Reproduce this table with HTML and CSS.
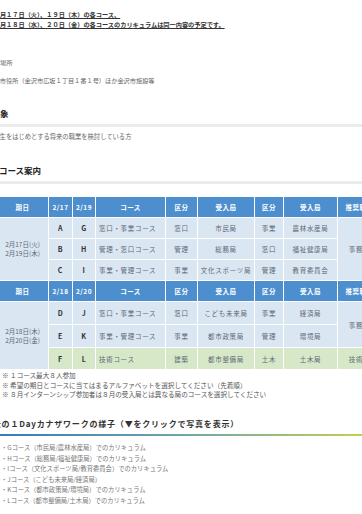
FILE: index.html
```html
<!DOCTYPE html>
<html lang="ja">
<head>
<meta charset="utf-8">
<link rel="stylesheet" href="styles.css">
</head>
<body>
<div class="page">
  <div class="notice">
    <p>２月１７日（火）、１９日（木）の各コース、</p>
    <p>２月１８日（水）、２０日（金）の各コースのカリキュラムは同一内容の予定です。</p>
  </div>

  <div class="place">
    <p class="label">開催場所</p>
    <p class="addr">金沢市役所（金沢市広坂１丁目１番１号）ほか金沢市施設等</p>
  </div>

  <h2 class="sec sec-target">対象</h2>
  <p class="target">大学生をはじめとする将来の職業を検討している方</p>

  <h2 class="sec sec-course">４．コース案内</h2>

  <table class="courses">
    <colgroup>
      <col class="c-date"><col class="c-a"><col class="c-b"><col class="c-course"><col class="c-kbn"><col class="c-dept"><col class="c-kbn2"><col class="c-dept2"><col class="c-job">
    </colgroup>
    <tr class="head">
      <th>期日</th><th>2/17</th><th>2/19</th><th>コース</th><th>区分</th><th>受入局</th><th>区分</th><th>受入局</th><th>推奨職種</th>
    </tr>
    <tr class="r1">
      <td rowspan="3" class="date">2月17日(火)<br>2月19日(木)</td>
      <td class="letter">A</td><td class="letter">G</td><td class="course">窓口・事業コース</td>
      <td>窓口</td><td>市民局</td><td>事業</td><td>農林水産局</td>
      <td rowspan="3">事務職</td>
    </tr>
    <tr class="r2">
      <td class="letter">B</td><td class="letter">H</td><td class="course">管理・窓口コース</td>
      <td>管理</td><td>総務局</td><td>窓口</td><td>福祉健康局</td>
    </tr>
    <tr class="r3">
      <td class="letter">C</td><td class="letter">I</td><td class="course">事業・管理コース</td>
      <td>事業</td><td>文化スポーツ局</td><td>管理</td><td>教育委員会</td>
    </tr>
    <tr class="head">
      <th>期日</th><th>2/18</th><th>2/20</th><th>コース</th><th>区分</th><th>受入局</th><th>区分</th><th>受入局</th><th>推奨職種</th>
    </tr>
    <tr class="r4">
      <td rowspan="3" class="date">2月18日(木)<br>2月20日(金)</td>
      <td class="letter">D</td><td class="letter">J</td><td class="course">窓口・事業コース</td>
      <td>窓口</td><td>こども未来局</td><td>事業</td><td>経済局</td>
      <td rowspan="2">事務職</td>
    </tr>
    <tr class="r5">
      <td class="letter">E</td><td class="letter">K</td><td class="course">事業・管理コース</td>
      <td>事業</td><td>都市政策局</td><td>管理</td><td>環境局</td>
    </tr>
    <tr class="r6 tech">
      <td class="letter">F</td><td class="letter">L</td><td class="course">技術コース</td>
      <td>建築</td><td>都市整備局</td><td>土木</td><td>土木局</td>
      <td>技術職</td>
    </tr>
  </table>

  <ul class="notes">
    <li>※ １コース最大８人参加</li>
    <li>※ 希望の期日とコースに当てはまるアルファベットを選択してください（先着順）</li>
    <li>※ ８月インターンシップ参加者は８月の受入局とは異なる局のコースを選択してください</li>
  </ul>

  <h2 class="sec sec-past">過去の１Dayカナザワークの様子（▼をクリックで写真を表示）</h2>

  <ul class="past">
    <li>・Gコース（市民局/農林水産局）でのカリキュラム</li>
    <li>・Hコース（総務局/福祉健康局）でのカリキュラム</li>
    <li>・Iコース（文化スポーツ局/教育委員会）でのカリキュラム</li>
    <li>・Jコース（こども未来局/経済局）</li>
    <li>・Kコース（都市政策局/環境局）でのカリキュラム</li>
    <li>・Lコース（都市整備局/土木局）でのカリキュラム</li>
  </ul>
</div>
</body>
</html>
```

FILE: styles.css
```css
html, body {
  margin: 0;
  padding: 0;
  background: #ffffff;
}
body {
  width: 362px;
  height: 514px;
  overflow: hidden;
  font-family: "Noto Sans CJK JP", "Noto Sans", sans-serif;
  color: #444;
}
.page {
  padding-top: 10px;
}
p, ul, h2 {
  margin: 0;
  padding: 0;
}
ul { list-style: none; }

.notice {
  margin-left: -6.3px;
  font-size: 6.2px;
  line-height: 10px;
  font-weight: 700;
  color: #333;
}
.notice p {
  text-decoration: underline;
}

.place {
  margin-top: 28px;
  font-size: 6.2px;
  line-height: 10px;
  color: #666;
}
.place .label { margin-left: -12px; }
.place .addr { margin-top: 8px; margin-left: -12.5px; }

.sec {
  font-size: 8.5px;
  line-height: 12px;
  font-weight: 700;
  color: #222;
}
.sec-target {
  margin-top: 21px;
  margin-left: -8.5px;
  padding-bottom: 5px;
  border-bottom: 3px solid #ececec;
}
.target {
  margin-top: 5px;
  margin-left: -13px;
  font-size: 6.3px;
  line-height: 10px;
  color: #666;
}
.sec-course {
  margin-top: 22px;
  margin-left: -18px;
  padding-bottom: 5px;
  border-bottom: 3px solid #ececec;
}

.courses {
  margin-top: 12px;
  margin-left: -4px;
  border-collapse: collapse;
  table-layout: fixed;
  width: 385px;
  font-size: 6.5px;
  letter-spacing: 0.7px;
  color: #5f6874;
}
.c-date { width: 52px; }
.c-a { width: 24px; }
.c-b { width: 23px; }
.c-course { width: 70px; }
.c-kbn { width: 32px; }
.c-dept { width: 57px; }
.c-kbn2 { width: 29px; }
.c-dept2 { width: 54px; }
.c-job { width: 44px; }

.courses th, .courses td {
  border: 1px solid #ffffff;
  padding: 0 2px;
  text-align: center;
  white-space: nowrap;
  overflow: hidden;
}
.courses th {
  background: #4d8fce;
  color: #ffffff;
  font-weight: 700;
  height: 20px;
  letter-spacing: 0.5px;
}
.courses td {
  background: #dbe6f3;
}
.courses .r1 td, .courses .r2 td, .courses .r3 td { height: 20px; }
.courses .r4 td, .courses .r5 td { height: 22px; }
.courses .r6 td { height: 21px; }
.courses .tech td { background: #d6e8c8; }
.courses td.date {
  line-height: 9px;
  letter-spacing: 0;
  background: #dbe6f3;
}
.courses td.letter {
  font-weight: 700;
  color: #333;
  font-size: 7px;
}
.courses td.course {
  text-align: left;
  padding-left: 3px;
}

.notes {
  margin-top: 1px;
  margin-left: 2px;
  font-size: 6.6px;
  line-height: 9.7px;
  color: #555;
}

.sec-past {
  margin-top: 18px;
  margin-left: -16px;
  font-size: 8px;
  letter-spacing: 0.8px;
  padding-bottom: 4px;
  position: relative;
  color: #333;
}
.sec-past::after {
  content: "";
  display: block;
  position: absolute;
  left: 0;
  right: -20px;
  bottom: -2px;
  height: 2px;
  background: linear-gradient(90deg, #2f78c2 0%, #6fa6a8 50%, #c9d54a 100%);
}
.past {
  margin-top: 9px;
  margin-left: 1px;
  font-size: 6.3px;
  line-height: 10.5px;
  color: #777;
}
```
